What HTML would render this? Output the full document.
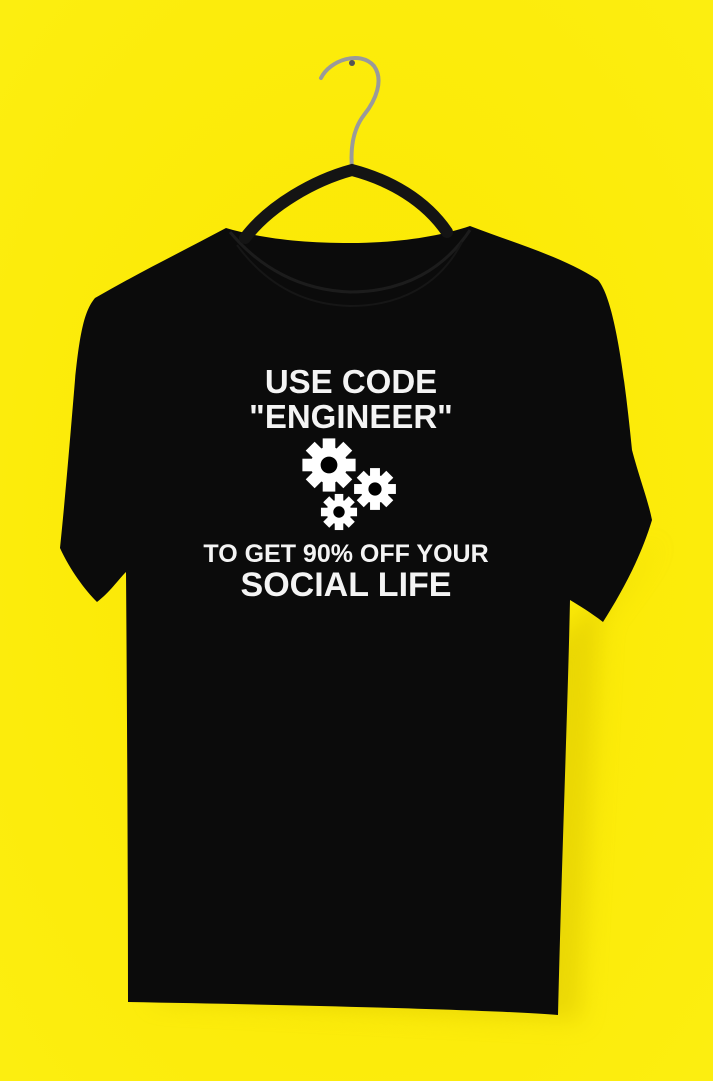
<!DOCTYPE html>
<html><head><meta charset="utf-8"><style>
html,body{margin:0;padding:0;background:#fbe903;}
svg{display:block}
</style></head><body>
<svg width="713" height="1081" viewBox="0 0 713 1081" xmlns="http://www.w3.org/2000/svg">
<defs>
<radialGradient id="bg" cx="0.5" cy="0.5" r="0.7">
<stop offset="0" stop-color="#fbe700"/><stop offset="1" stop-color="#fcee10"/>
</radialGradient>
<filter id="sh" x="-20%" y="-20%" width="140%" height="140%"><feGaussianBlur stdDeviation="12"/></filter>
<g id="gear">
<circle r="13" fill="#fff"/>
<g fill="#fff">
<rect x="-4.5" y="-19" width="9" height="38"/>
<rect x="-4.5" y="-19" width="9" height="38" transform="rotate(45)"/>
<rect x="-4.5" y="-19" width="9" height="38" transform="rotate(90)"/>
<rect x="-4.5" y="-19" width="9" height="38" transform="rotate(135)"/>
</g>
<circle r="6" fill="#000"/>
</g>
</defs>
<rect width="713" height="1081" fill="url(#bg)"/>
<!-- shadow -->
<path d="M150 1000 L580 1020 L600 620 L660 540 L600 600 Z" fill="#d9c400" opacity="0.5" filter="url(#sh)"/>
<!-- hanger hook -->
<path d="M321 78 C330 60 360 50 374 66 C384 80 376 100 364 115 C354 128 350 145 352 168" fill="none" stroke="#9a9a9a" stroke-width="4" stroke-linecap="round"/>
<circle cx="352" cy="63" r="3" fill="#555"/>
<!-- shirt -->
<path d="M226 228 C260 238 300 243 350 243 C400 243 440 236 470 226
C520 245 565 258 598 280 C615 300 625 380 632 450 C640 480 648 500 652 520
C640 560 620 595 603 622 C590 612 580 606 570 600
C568 700 562 850 558 1015 C500 1010 300 1005 128 1002
C128 880 127 700 126 572 C118 580 110 592 97 602
C85 590 70 570 60 548 C65 500 70 440 75 380 C80 330 85 310 95 298
C140 272 185 250 226 228 Z" fill="#0b0b0b"/>
<!-- collar -->
<path d="M230 232 C260 268 300 290 350 292 C405 292 445 268 470 230" fill="none" stroke="#1c1c1c" stroke-width="3"/>
<path d="M237 245 C270 290 310 305 350 306 C400 306 440 285 462 242" fill="none" stroke="#161616" stroke-width="2"/>
<!-- hanger bar -->
<path d="M245 238 C270 205 315 180 352 170 C390 180 425 200 447 232" fill="none" stroke="#141414" stroke-width="12" stroke-linecap="round"/>
<!-- text -->
<g fill="#f4f4f4" font-family="'Liberation Sans',sans-serif" font-weight="bold" text-anchor="middle">
<text x="351" y="393" font-size="33">USE CODE</text>
<text x="351" y="428" font-size="33">"ENGINEER"</text>
<text x="346" y="562" font-size="25">TO GET 90% OFF YOUR</text>
<text x="346" y="596" font-size="34">SOCIAL LIFE</text>
</g>
<use href="#gear" transform="translate(329,465) scale(1.4)"/>
<use href="#gear" transform="translate(375,489) scale(1.1)"/>
<use href="#gear" transform="translate(339,512) scale(0.95)"/>
</svg>
</body></html>
